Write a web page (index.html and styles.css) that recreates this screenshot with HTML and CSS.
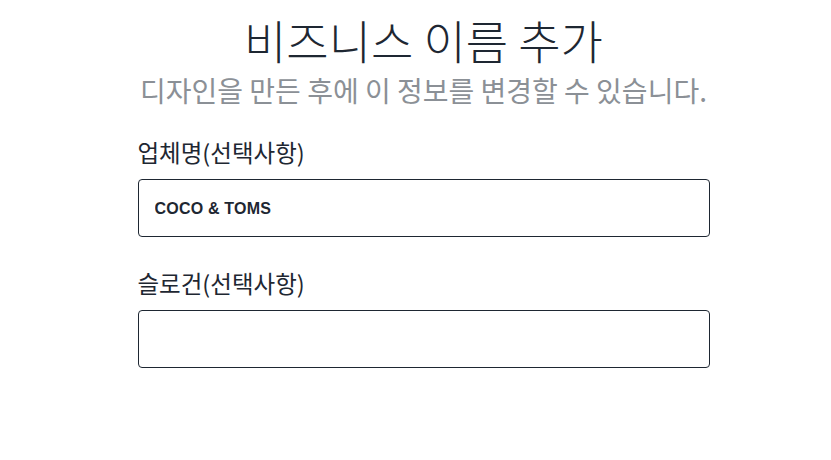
FILE: index.html
```html
<html>

<head>
    <meta charset="UTF-8">
    <meta name="viewport" content="width=device-width, initial-scale=1.0">
    <title>비즈니스 이름 추가</title>
    <link rel="stylesheet" href="styles.css">
</head>

<body>
    <div class="container">
        <h1 class="title">비즈니스 이름 추가</h1>
        <p class="subtitle">디자인을 만든 후에 이 정보를 변경할 수 있습니다.</p>

        <div class="field">
            <label for="companyName">업체명(선택사항)</label>
            <input type="text" id="companyName" value="COCO &amp; TOMS">
        </div>

        <div class="field">
            <label for="slogan">슬로건(선택사항)</label>
            <input type="text" id="slogan" value="">
        </div>
    </div>
</body>

</html>
```

FILE: styles.css
```css
body {
    font-family: "Noto Sans CJK KR", "Noto Sans", sans-serif;
    margin: 0;
    padding-left: 16px;
    background-color: #ffffff;
    color: #1e2732;
}

.container {
    width: 572px;
    margin: 0 auto;
    padding-top: 11px;
}

.title {
    text-align: center;
    font-size: 46px;
    font-weight: 300;
    line-height: 56px;
    margin: 0;
    color: #1e2732;
}

.subtitle {
    text-align: center;
    font-size: 28px;
    font-weight: 400;
    line-height: 36px;
    margin: 5px 0 28px;
    color: #8b9096;
}

.field {
    display: flex;
    flex-direction: column;
    margin-bottom: 30px;
}

.field label {
    font-size: 23.5px;
    line-height: 32px;
    margin-bottom: 11px;
    color: #1e2732;
}

.field input {
    height: 58px;
    box-sizing: border-box;
    border: 1px solid #1e2732;
    border-radius: 4px;
    padding: 2px 16px 0;
    font-family: "Liberation Sans", Arial, sans-serif;
    font-size: 16px;
    font-weight: 700;
    letter-spacing: 0.2px;
    color: #1e2732;
    outline: none;
}
```
